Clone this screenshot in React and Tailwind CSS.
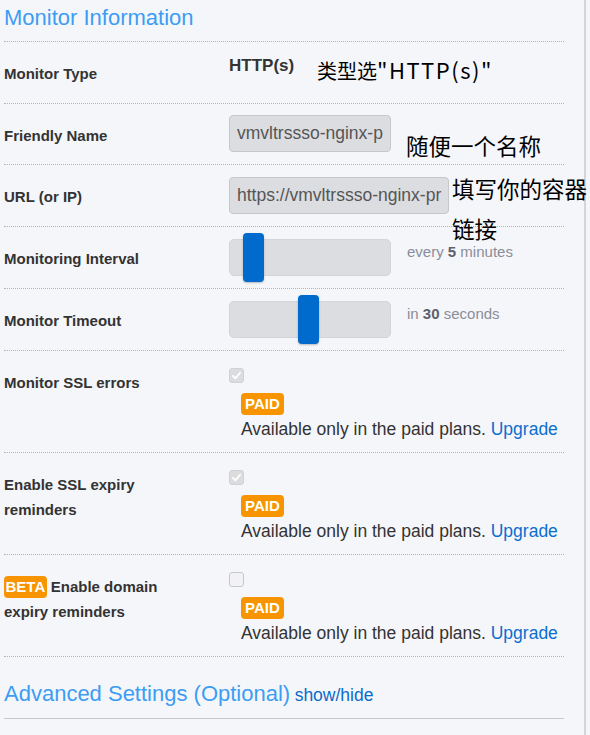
const Label = ({ children }) => (
  <div className="w-[225px] shrink-0 pr-[55px] pt-[19px] text-[15px] font-bold leading-[25px] text-[#333]">
    {children}
  </div>
);

const Slider = ({ left, children }) => (
  <div className="flex items-start pt-[6px]">
    <div className="relative w-[162px] h-[49px]">
      <div className="mt-[6px] h-[37px] rounded-[5px] bg-[#dcdde1] border border-[#d3d4d8]"></div>
      <div
        className="absolute top-0 w-[21px] h-[49px] rounded-[4px] bg-[#006bcc] shadow-[0_1px_2px_rgba(0,0,0,0.25)]"
        style={{ left }}
      ></div>
    </div>
    <div className="ml-[16px] mt-[9px] text-[15px] leading-[20px] text-[#8a8d99]">{children}</div>
  </div>
);

const Check = ({ checked }) =>
  checked ? (
    <div className="w-[15px] h-[15px] rounded-[3px] bg-[#dcdcdf] border border-[#d0d1d4] flex items-center justify-center">
      <svg width="11" height="11" viewBox="0 0 12 12">
        <path d="M2 6.5 L4.8 9.2 L10 3" fill="none" stroke="#fff" strokeWidth="2" strokeLinecap="round" strokeLinejoin="round" />
      </svg>
    </div>
  ) : (
    <div className="w-[15px] h-[15px] rounded-[3px] bg-[#f2f2f4] border border-[#c6c7ca]"></div>
  );

const Paid = ({ checked }) => (
  <div className="pt-[17px]">
    <Check checked={checked} />
    <div className="ml-[12px] mt-[9px]">
      <span className="inline-flex items-center h-[22px] px-[4px] rounded-[4px] bg-[#f79400] text-white text-[15px] font-bold">
        PAID
      </span>
      <div className="text-[17.5px] leading-[26px] text-[#333]">
        Available only in the paid plans. <span className="text-[#0a6ecf]">Upgrade</span>
      </div>
    </div>
  </div>
);

const rowCls = 'flex border-b border-dotted border-[#b4b4b8]';

export default function App() {
  return (
    <div className="min-h-screen w-full overflow-hidden bg-[#f5f6fa] font-['Liberation_Sans',Arial,sans-serif]">
      <div className="relative w-[586px] min-h-[735px] border-r-2 border-[#d4d5d9] pl-[4px]">
        <div className="w-[560px]">
          {/* Header */}
          <div className="h-[42px] pt-[4px] border-b border-dotted border-[#b4b4b8]">
            <h2 className="text-[22px] leading-[28px] text-[#3d9df3]">Monitor Information</h2>
          </div>

          <div className={`${rowCls} h-[62px]`}>
            <Label>Monitor Type</Label>
            <div className="pt-[14px] text-[17px] font-bold leading-[20px] text-[#333]">HTTP(s)</div>
          </div>

          <div className={`${rowCls} h-[61px]`}>
            <Label>Friendly Name</Label>
            <div className="pt-[11px]">
              <div className="w-[162px] h-[37px] rounded-[4px] border border-[#c6c7cb] bg-[#dcdde1] pl-[7px] overflow-hidden whitespace-nowrap text-[17.5px] leading-[35px] text-[#555]">
                vmvltrssso-nginx-p
              </div>
            </div>
          </div>

          <div className={`${rowCls} h-[62px]`}>
            <Label>URL (or IP)</Label>
            <div className="pt-[12px]">
              <div className="w-[220px] h-[37px] rounded-[4px] border border-[#c6c7cb] bg-[#dcdde1] pl-[7px] overflow-hidden whitespace-nowrap text-[17.5px] leading-[35px] text-[#555]">
                https://vmvltrssso-nginx-pr
              </div>
            </div>
          </div>

          <div className={`${rowCls} h-[62px]`}>
            <Label>Monitoring Interval</Label>
            <Slider left={14}>
              every <b className="text-[#5c606b]">5</b> minutes
            </Slider>
          </div>

          <div className={`${rowCls} h-[62px]`}>
            <Label>Monitor Timeout</Label>
            <Slider left={69}>
              in <b className="text-[#5c606b]">30</b> seconds
            </Slider>
          </div>

          <div className={`${rowCls} h-[102px]`}>
            <Label>Monitor SSL errors</Label>
            <Paid checked />
          </div>

          <div className={`${rowCls} h-[102px]`}>
            <Label>Enable SSL expiry reminders</Label>
            <Paid checked />
          </div>

          <div className={`${rowCls} h-[102px]`}>
            <Label>
              <span className="inline-block align-middle h-[22px] leading-[22px] px-[1.5px] mr-[4px] rounded-[4px] bg-[#f79400] text-white relative top-[-1px]">
                BETA
              </span>
              Enable domain expiry reminders
            </Label>
            <Paid />
          </div>

          {/* Advanced */}
          <div className="h-[62px] pt-[23px] border-b border-[#c8c9cc]">
            <span className="text-[22px] leading-[28px] text-[#3d9df3]">Advanced Settings (Optional)</span>{' '}
            <span className="text-[17.5px] text-[#0b6bcb]">show/hide</span>
          </div>
        </div>

        {/* Annotations */}
        <div className="absolute left-[317px] top-[55px] whitespace-nowrap text-[20px] leading-[28px] text-black font-['Noto_Sans_CJK_SC',sans-serif]">
          类型选<span className="text-[22px] tracking-[1.5px]">"HTTP(s)"</span>
        </div>
        <div className="absolute left-[406px] top-[130px] whitespace-nowrap text-[22.5px] leading-[30px] text-black font-['Noto_Sans_CJK_SC',sans-serif]">
          随便一个名称
        </div>
        <div className="absolute left-[452px] top-[168px] whitespace-nowrap text-[22.5px] leading-[40px] text-black font-['Noto_Sans_CJK_SC',sans-serif]">
          填写你的容器
          <br />
          链接
        </div>
      </div>
    </div>
  );
}
